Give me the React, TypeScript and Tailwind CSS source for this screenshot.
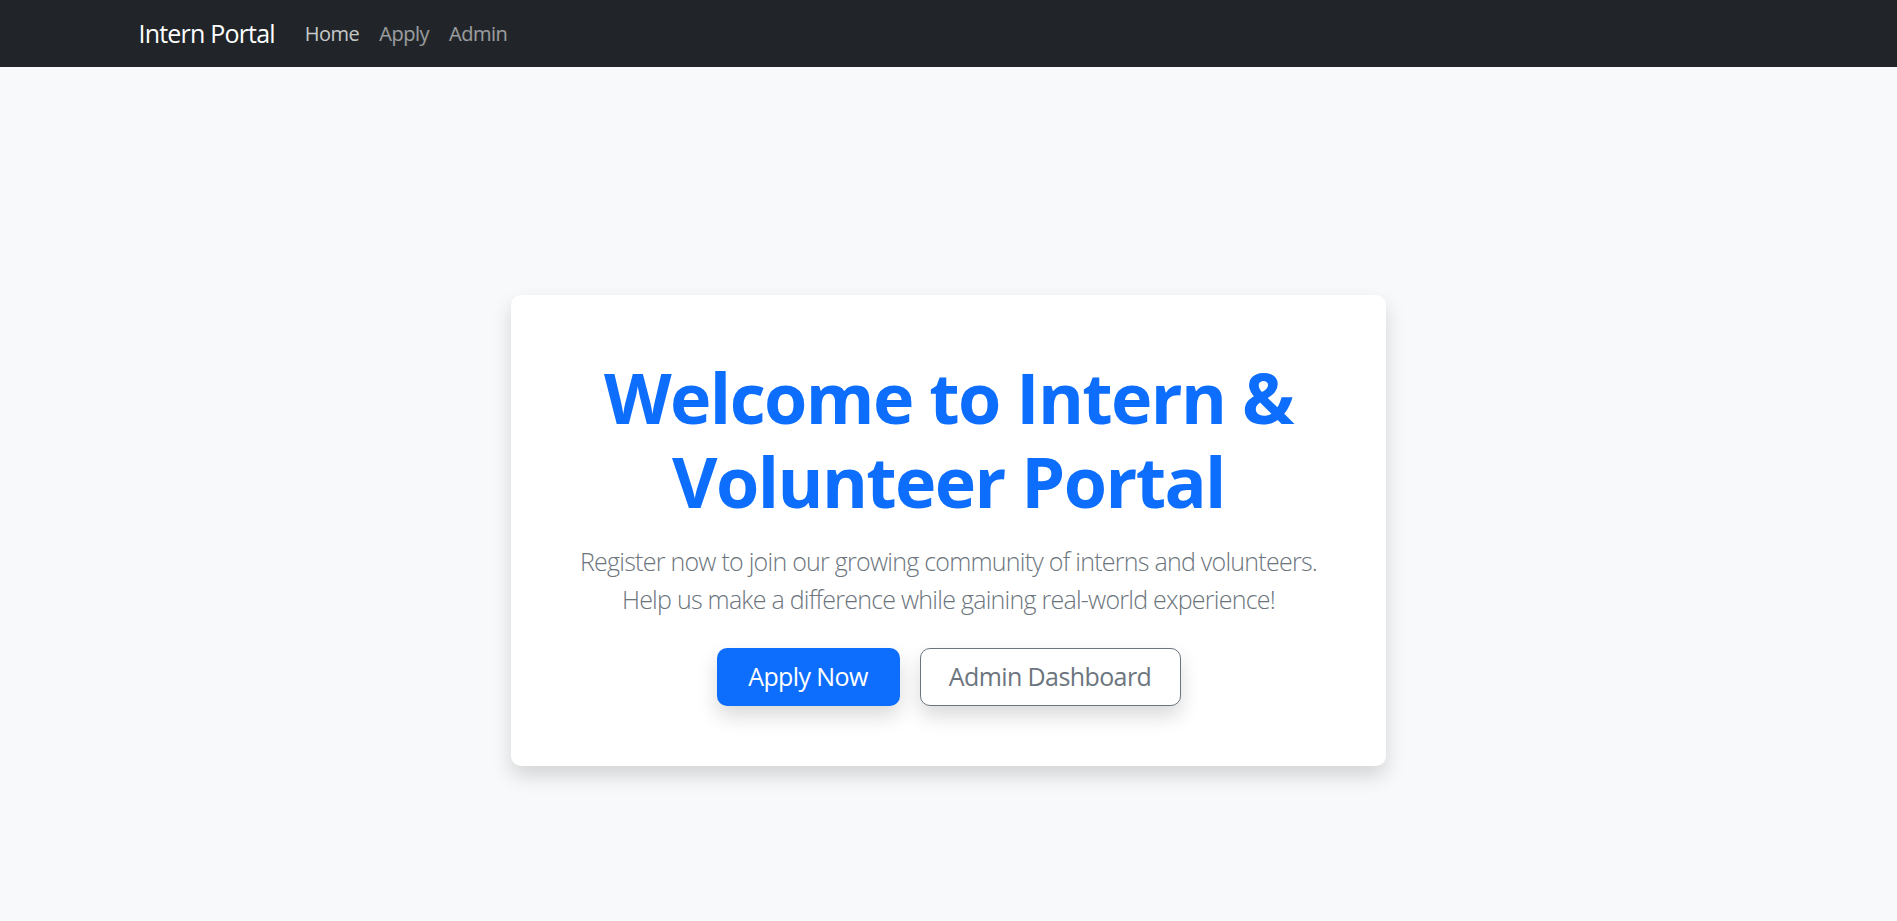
import React from "react";

export default function App() {
  const font = { fontFamily: '"Open Sans", "Noto Sans", sans-serif' };
  return (
    <div className="min-h-[921px] bg-[#f8f9fa]" style={font}>
      <nav className="h-[67px] bg-[#212529] flex items-center">
        <div className="mx-auto w-full max-w-[1650px] px-[15px] flex items-center">
          <a className="text-[25px] leading-[37px] tracking-[-0.8px] text-white mr-[20px]">Intern Portal</a>
          <div className="flex items-center text-[20px] leading-[30px] tracking-[-0.5px]">
            <a className="px-[10px] text-white/75">Home</a>
            <a className="px-[10px] text-white/55">Apply</a>
            <a className="px-[10px] text-white/55">Admin</a>
          </div>
        </div>
      </nav>
      <main className="flex justify-center pt-[228px]">
        <div className="w-[875px] bg-white rounded-[10px] shadow-[0_10px_20px_rgba(0,0,0,0.15)] p-[60px] text-center">
          <h1 className="text-[70px] leading-[84px] font-bold tracking-[-1.6px] text-[#0d6efd] mb-[20px]">
            Welcome to Intern &amp;
            <br />
            Volunteer Portal
          </h1>
          <p className="text-[25px] leading-[37.5px] font-light tracking-[-0.75px] whitespace-nowrap text-[#6c757d] mb-[30px]">
            Register now to join our growing community of interns and volunteers.
            <br />
            Help us make a difference while gaining real-world experience!
          </p>
          <div className="flex justify-center gap-[20px]">
            <button className="h-[58px] w-[183px] rounded-[10px] bg-[#0d6efd] text-white text-[25px] tracking-[-0.6px] shadow-[0_10px_20px_rgba(0,0,0,0.15)]">
              Apply Now
            </button>
            <button className="h-[58px] w-[261px] rounded-[10px] bg-white border border-[#6c757d] text-[#6c757d] text-[25px] tracking-[-0.6px] shadow-[0_10px_20px_rgba(0,0,0,0.15)]">
              Admin Dashboard
            </button>
          </div>
        </div>
      </main>
    </div>
  );
}
